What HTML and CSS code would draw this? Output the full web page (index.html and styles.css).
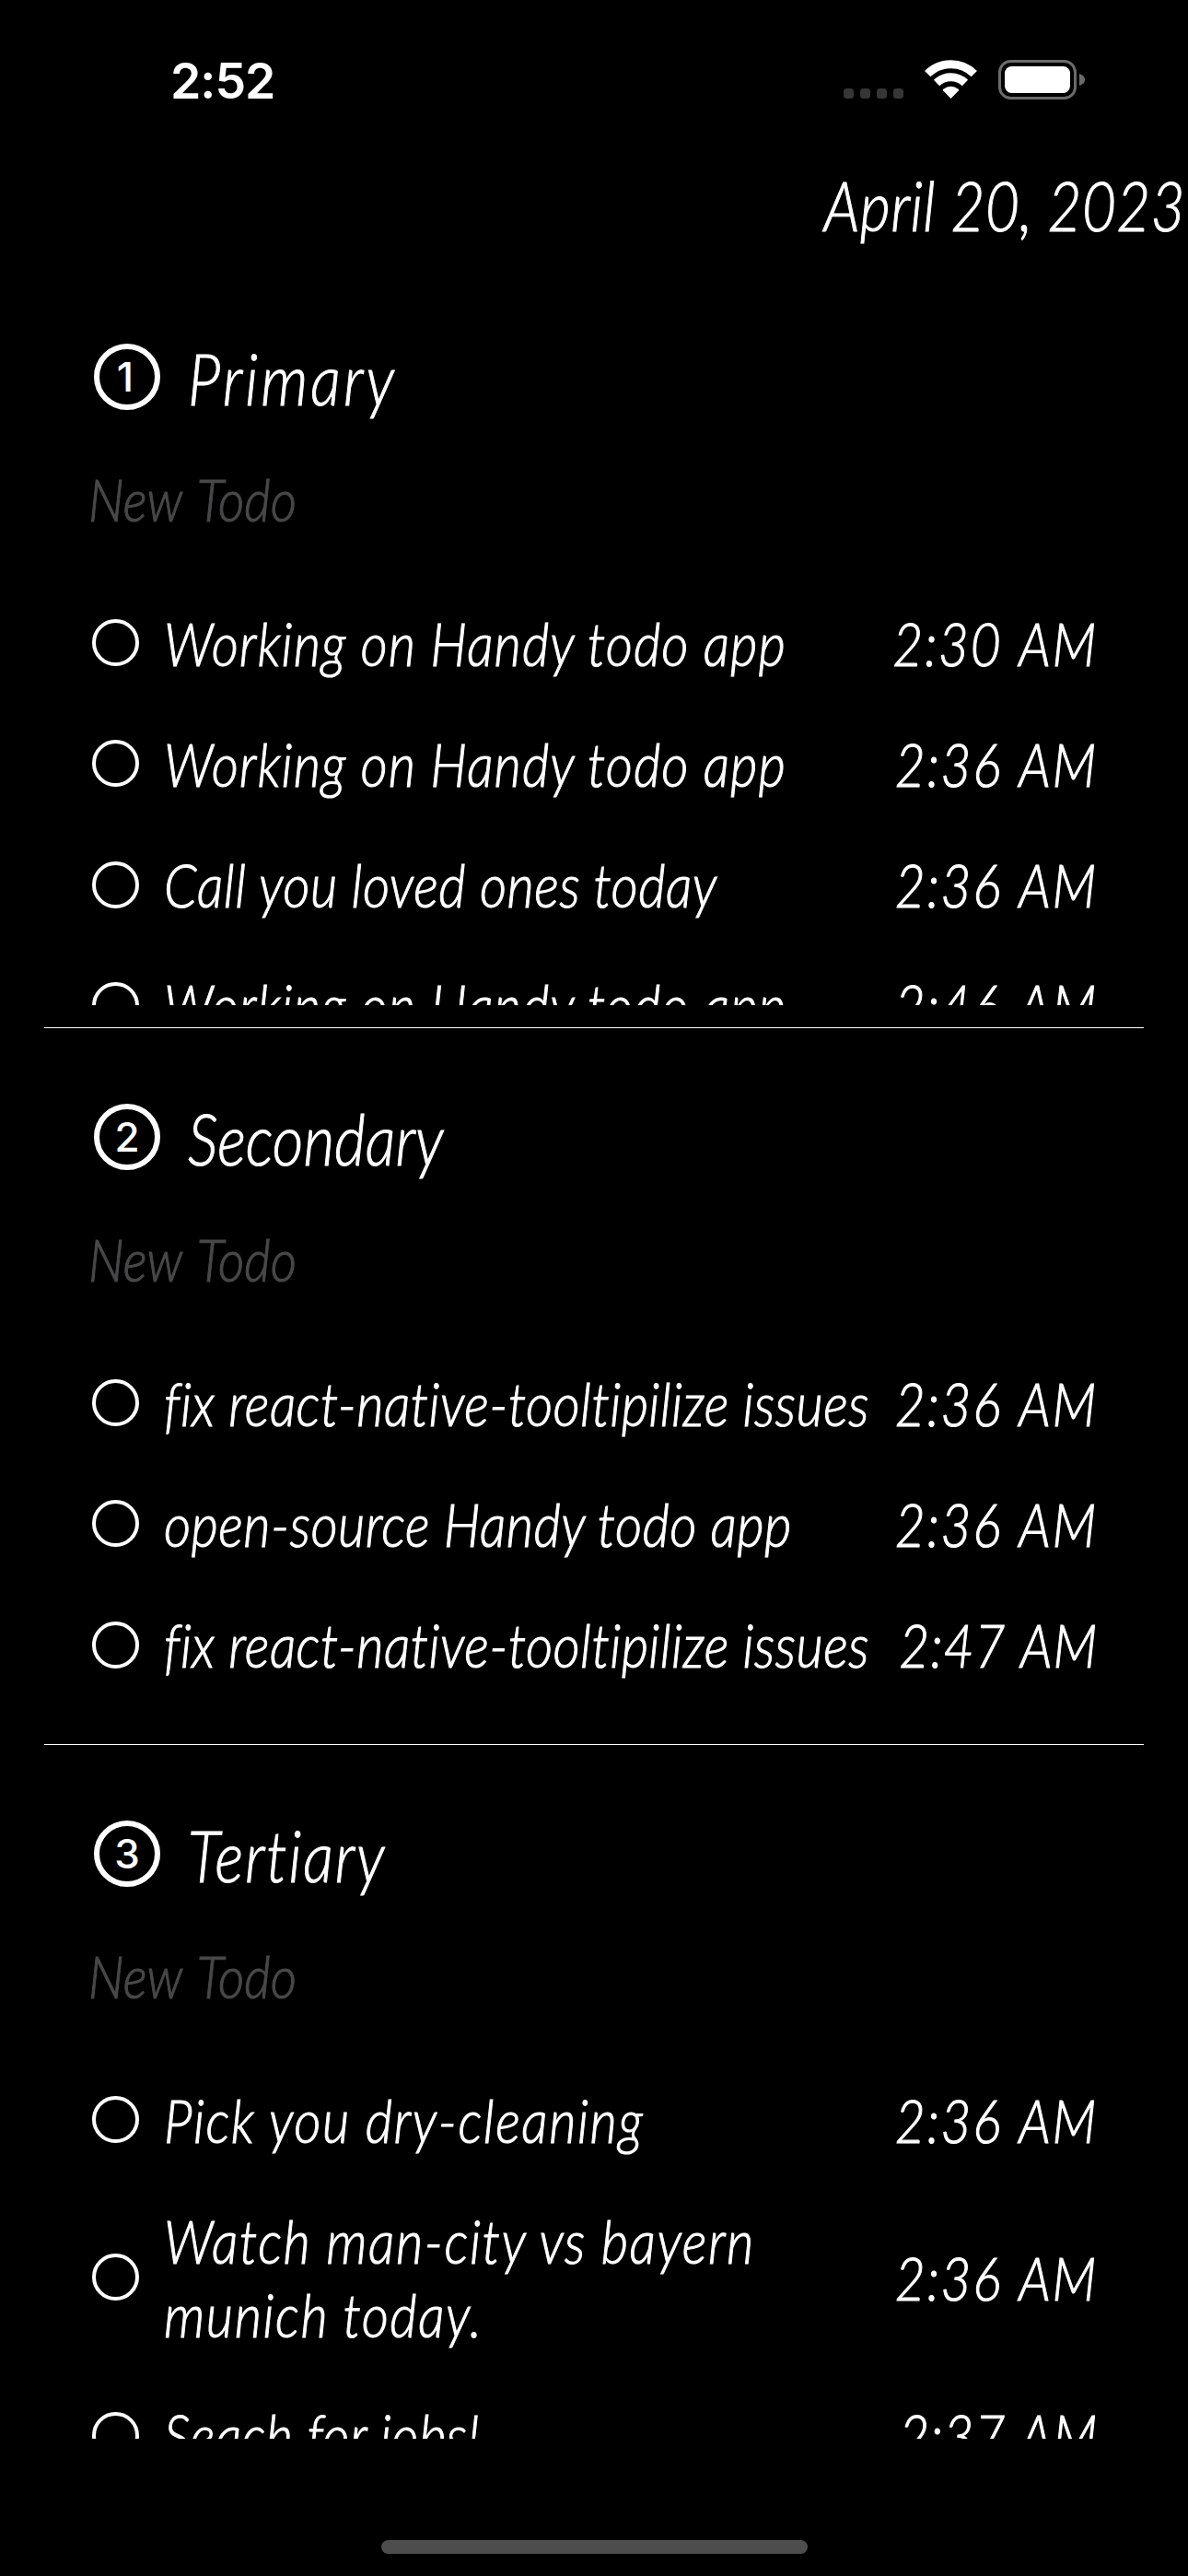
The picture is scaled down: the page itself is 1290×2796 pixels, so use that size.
FILE: index.html
```html
<!DOCTYPE html>
<html lang="en">
<head>
<meta charset="utf-8">
<title>Handy Todo</title>
<link rel="stylesheet" href="styles.css">
</head>
<body>
<div class="screen">
  <header class="status">
    <span class="clock">2:52</span>
    <svg class="status-icons" viewBox="0 0 264 44" width="264" height="44">
      <g fill="#363636">
        <rect x="0" y="31" width="11" height="11" rx="3.5"/>
        <rect x="18" y="31" width="11" height="11" rx="3.5"/>
        <rect x="36" y="31" width="11" height="11" rx="3.5"/>
        <rect x="54" y="31" width="11" height="11" rx="3.5"/>
      </g>
      <g fill="none" stroke="#fff" stroke-width="9">
        <path d="M91.2 15.1A36 36 0 0 1 141.800 15.100"/>
        <path d="M101.100 25A22 22 0 0 1 131.900 25"/>
      </g>
      <path d="M116.500 42L108 33.300Q107.400 32.500 108.300 31.800Q116.500 25.500 124.700 31.800Q125.600 32.500 125 33.300Z" fill="#fff"/>
      <rect x="169.500" y="1.500" width="82" height="40" rx="12" fill="none" stroke="#6b6b6b" stroke-width="3"/>
      <rect x="175" y="7" width="71" height="29" rx="7.500" fill="#fff"/>
      <path d="M256 15Q262 17 262 21.500Q262 26 256 28Z" fill="#6b6b6b"/>
    </svg>
  </header>

  <div class="date"><span class="hand">April 20, 2023</span></div>

  <main>
    <section class="group first">
      <h2 class="group-title">
        <svg class="badge" viewBox="0 0 72 72" width="72" height="72"><circle cx="36" cy="36" r="33"/><text x="34" y="52">1</text></svg>
        <span class="hand">Primary</span>
      </h2>
      <div class="entry"><span class="hand">New Todo</span></div>
      <ul class="list">
        <li class="todo"><i class="ring"></i><p class="label"><span class="hand">Working on Handy todo app</span></p><time class="hand">2:30 AM</time></li>
        <li class="todo"><i class="ring"></i><p class="label"><span class="hand">Working on Handy todo app</span></p><time class="hand">2:36 AM</time></li>
        <li class="todo"><i class="ring"></i><p class="label snug"><span class="hand">Call you loved ones today</span></p><time class="hand">2:36 AM</time></li>
        <li class="todo"><i class="ring"></i><p class="label"><span class="hand">Working on Handy todo app</span></p><time class="hand">2:46 AM</time></li>
      </ul>
    </section>

    <section class="group second">
      <h2 class="group-title">
        <svg class="badge" viewBox="0 0 72 72" width="72" height="72"><circle cx="36" cy="36" r="33"/><text x="36" y="52">2</text></svg>
        <span class="hand">Secondary</span>
      </h2>
      <div class="entry"><span class="hand">New Todo</span></div>
      <ul class="list">
        <li class="todo"><i class="ring"></i><p class="label"><span class="hand">fix react-native-tooltipilize issues</span></p><time class="hand">2:36 AM</time></li>
        <li class="todo"><i class="ring"></i><p class="label"><span class="hand">open-source Handy todo app</span></p><time class="hand">2:36 AM</time></li>
        <li class="todo"><i class="ring"></i><p class="label"><span class="hand">fix react-native-tooltipilize issues</span></p><time class="hand snug">2:47 AM</time></li>
      </ul>
    </section>

    <section class="group third">
      <h2 class="group-title">
        <svg class="badge" viewBox="0 0 72 72" width="72" height="72"><circle cx="36" cy="36" r="33"/><text x="36" y="52">3</text></svg>
        <span class="hand">Tertiary</span>
      </h2>
      <div class="entry"><span class="hand">New Todo</span></div>
      <ul class="list">
        <li class="todo"><i class="ring"></i><p class="label"><span class="hand">Pick you dry-cleaning</span></p><time class="hand">2:36 AM</time></li>
        <li class="todo"><i class="ring"></i><p class="label"><span class="hand">Watch man-city vs bayern<br>munich today.</span></p><time class="hand">2:36 AM</time></li>
        <li class="todo"><i class="ring"></i><p class="label snug"><span class="hand">Seach for jobs!</span></p><time class="hand snug">2:37 AM</time></li>
      </ul>
    </section>
  </main>

  <footer class="home"><span class="home-bar"></span></footer>
</div>
</body>
</html>
```
FILE: styles.css
```css
* { box-sizing: border-box; margin: 0; padding: 0; }

body { background: #000; color: #fff; }

.screen {
  width: 1290px;
  height: 2796px;
  overflow: hidden;
  display: flex;
  flex-direction: column;
  background: #000;
}

.status {
  height: 177px;
  flex: none;
  display: flex;
  justify-content: space-between;
  align-items: flex-start;
  padding: 65px 110px 0 185px;
}

.clock {
  font: 600 53.5px/46px Inter, sans-serif;
  letter-spacing: -1px;
}

/* Narrow, thin handwriting-like slant */
.hand {
  display: block;
  font-family: Lato, sans-serif;
  font-style: italic;
  font-weight: 300;
  font-variant-ligatures: none;
  white-space: nowrap;
  -webkit-text-stroke: 1.1px currentColor;
  transform: scaleX(0.86);
  transform-origin: left center;
}

.date {
  height: 146px;
  flex: none;
  text-align: right;
  padding-right: 3px;
}

.date .hand {
  font-size: 74px;
  line-height: 92px;
  letter-spacing: 0.5px;
  transform-origin: right center;
}

.group { padding: 32px 98px 0 96px; }
.first, .second { border-bottom: 1px solid #fff; }
.group.first, .group.second { padding-left: 48px; padding-right: 50px; margin: 0 48px; }
.group.first { height: 793px; padding-top: 0; }
.second { height: 778px; }

.group-title {
  height: 172px;
  display: flex;
  align-items: center;
  gap: 30px;
  padding-left: 6px;
  font-size: 76px;
  line-height: 94px;
}
.first .group-title .hand { letter-spacing: 3.6px; }
.third .group-title .hand { letter-spacing: 2.2px; }
.group-title .hand { padding-top: 3px; }

.badge { flex: none; }
.badge circle { fill: none; stroke: #fff; stroke-width: 6; }
.badge text { font: 550 44px Inter, sans-serif; fill: #fff; text-anchor: middle; }

.entry {
  height: 137px;
  font-size: 64px;
  line-height: 94px;
  word-spacing: 5px;
  color: #48484a;
}

.list {
  height: 459px;
  overflow: hidden;
  list-style: none;
}
.second .list, .third .list { height: 412px; }

.todo {
  display: flex;
  align-items: center;
  padding: 25.65px 0;
  font-size: 66px;
  line-height: 80px;
}

.ring {
  flex: none;
  width: 51px;
  height: 51px;
  margin: 0 27px 0 4px;
  border: 4px solid #fff;
  border-radius: 50%;
}

.label { flex: 1; min-width: 0; letter-spacing: 1.2px; }
.second .label { letter-spacing: 0.5px; }
.third .label { letter-spacing: 1.8px; }
.first .label.snug, .third .label.snug { letter-spacing: 0.6px; }
.todo time { transform-origin: right center; letter-spacing: 2px; word-spacing: 4px; }
.todo time.snug { letter-spacing: 1.2px; word-spacing: 2px; }

.home {
  flex: 1;
  display: flex;
  justify-content: center;
  align-items: flex-end;
  padding-bottom: 24px;
}

.home-bar {
  width: 463px;
  height: 15px;
  border-radius: 8px;
  background: #4d4d4d;
}
```
